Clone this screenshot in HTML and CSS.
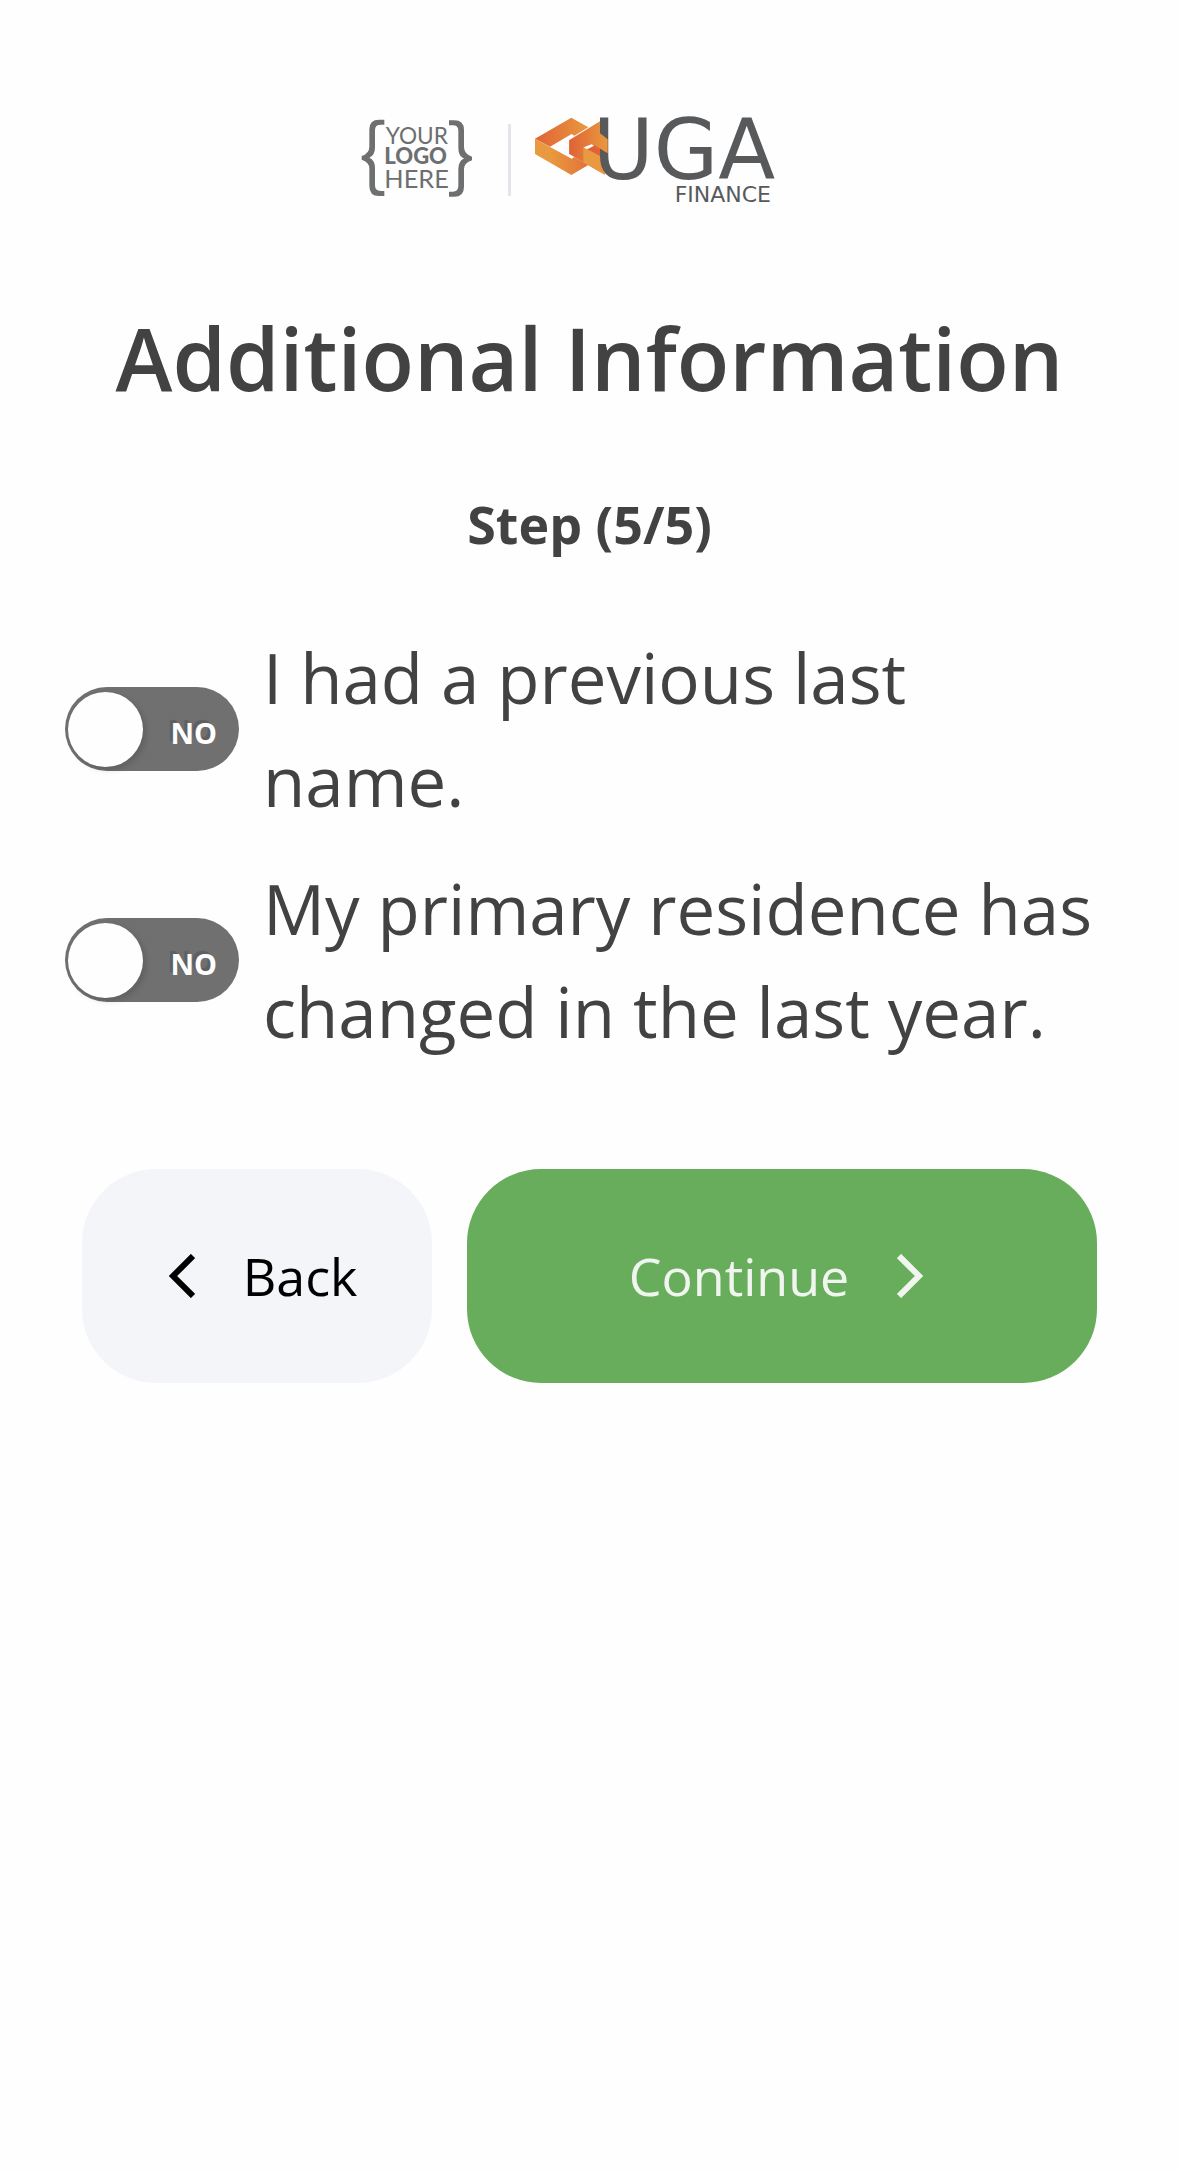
FILE: index.html
```html
<!DOCTYPE html>
<html lang="en">
<head>
  <meta charset="utf-8">
  <meta name="viewport" content="width=device-width, initial-scale=1">
  <title>Additional Information</title>
  <link rel="stylesheet" href="styles.css">
</head>
<body>
  <header class="brand">
    <svg class="partner-logo" viewBox="9 0 393 330" role="img" aria-label="Your logo here">
      <path d="M103 59H87Q58 59 58 88V140Q58 160 35 168V179Q58 187 58 205V258Q58 288 87 288H103V273H92Q75 273 75 256V205Q75 181 58 173.500Q75 166 75 142V90Q75 74 92 74H103Z"/>
      <path d="M297 61H313Q342 61 342 90V142Q342 162 366 170V181Q342 189 342 207V260Q342 290 313 290H297V275H308Q325 275 325 258V207Q325 183 342 175.500Q325 168 325 144V92Q325 76 308 76H297Z"/>
      <text class="partner-light" x="107" y="131" font-size="68">YOUR</text>
      <text class="partner-bold" x="103" y="193" font-size="66">LOGO</text>
      <text class="partner-light" x="103" y="265" font-size="76">HERE</text>
    </svg>
    <span class="divider"></span>
    <svg class="uga-logo" viewBox="45 0 873 330" role="img" aria-label="UGA Finance">
      <defs>
        <linearGradient id="toRight"><stop offset="0" stop-color="#e06236"/><stop offset="1" stop-color="#e9993f"/></linearGradient>
        <linearGradient id="toLeft"><stop offset="0.300" stop-color="#e9993f"/><stop offset="1" stop-color="#e27238"/></linearGradient>
      </defs>
      <path fill="url(#toRight)" d="M45 116L154 53L205 82L163 107L155 102L90 140Z"/>
      <path fill="url(#toLeft)" d="M45 116L155 176L163 171L205 195L154 225L45 162Z"/>
      <path fill="#e06236" d="M186 142L215 128L244 142V172Z"/>
      <path fill="url(#toRight)" d="M148 120L190 142L255 178V225L148 162Z"/>
      <path fill="#fefefe" d="M190 142L214 131L222 137L199 149Z"/>
      <text class="uga-name" x="218" y="236" font-size="250">UGA</text>
      <path fill="#e9993f" d="M190 142L240 168V216L190 187Z"/>
      <path fill="url(#toRight)" d="M148 120L240 64V100L263 118V160L217 132L190 142L148 162Z"/>
      <text class="uga-name" x="464" y="305" font-size="66">FINANCE</text>
    </svg>
  </header>

  <main class="content">
    <h1 class="title">Additional Information</h1>
    <h2 class="step">Step (5/5)</h2>

    <form class="form">
      <div class="options">
        <label class="option">
          <span class="switch">
            <input class="switch-input" type="checkbox" name="previous-name">
            <span class="knob"></span>
            <span class="state">NO</span>
          </span>
          <span class="option-text">I had a previous last name.</span>
        </label>
        <label class="option">
          <span class="switch">
            <input class="switch-input" type="checkbox" name="residence-changed">
            <span class="knob"></span>
            <span class="state">NO</span>
          </span>
          <span class="option-text">My primary residence has changed in the last year.</span>
        </label>
      </div>

      <div class="actions">
        <button class="button back" type="button">
          <svg class="chevron" viewBox="-12 0 38 44" aria-hidden="true"><path d="M24 2L4 22L24 42"/></svg>
          <span>Back</span>
        </button>
        <button class="button continue" type="submit">
          <span>Continue</span>
          <svg class="chevron" viewBox="0 0 38 44" aria-hidden="true"><path d="M2 2L22 22L2 42"/></svg>
        </button>
      </div>
    </form>
  </main>
</body>
</html>
```

FILE: styles.css
```css
* {
  box-sizing: border-box;
}

body {
  margin: 0;
  min-height: 100vh;
  background: #fefefe;
  color: #424242;
  font-family: "Open Sans", sans-serif;
}

.brand {
  display: flex;
  justify-content: center;
  align-items: flex-start;
  gap: 24px;
  padding-top: 100px;
}

.partner-logo {
  width: 131px;
  height: 110px;
  fill: #6d6f71;
}

.partner-light {
  font-family: Lato, sans-serif;
  font-weight: 400;
}

.partner-bold {
  font-family: Lato, sans-serif;
  font-weight: 900;
}

.divider {
  width: 3px;
  height: 72px;
  margin-top: 24px;
  background: #e4e4ea;
}

.uga-logo {
  width: 291px;
  height: 110px;
  overflow: visible;
}

.uga-name {
  fill: #58595b;
  font-family: "DejaVu Sans", sans-serif;
}

.title {
  margin: 88px 0 70px;
  font-size: 86px;
  line-height: 120px;
  font-weight: 600;
  text-align: center;
}

.step {
  margin: 0 0 66px;
  font-size: 52px;
  line-height: 72px;
  font-weight: 700;
  text-align: center;
}

.options {
  display: grid;
  gap: 25px;
  padding: 0 65px;
}

.option {
  display: flex;
  align-items: center;
  gap: 24px;
}

.option-text {
  font-size: 69px;
  line-height: 103px;
}

.switch {
  position: relative;
  flex: none;
  display: flex;
  align-items: center;
  justify-content: space-between;
  width: 174px;
  height: 84px;
  padding: 0 22px 0 3px;
  border-radius: 42px;
  background: #707070;
}

.switch-input {
  position: absolute;
  inset: 0;
  width: 100%;
  height: 100%;
  margin: 0;
  opacity: 0;
}

.knob {
  width: 75px;
  height: 75px;
  border-radius: 50%;
  background: #fefefe;
  box-shadow: 3px 3px 6px rgba(0, 0, 0, 0.15);
}

.state {
  padding-top: 8px;
  color: #fefefe;
  font-family: "Noto Sans", sans-serif;
  font-size: 29px;
  line-height: 40px;
  font-weight: 700;
  text-shadow: -3px -3px 1px rgba(0, 0, 0, 0.15);
}

.actions {
  display: grid;
  grid-template-columns: 5fr 9fr;
  gap: 35px;
  margin-top: 106px;
  padding: 0 82px;
}

.button {
  display: flex;
  align-items: center;
  justify-content: center;
  gap: 48px;
  padding: 72px 0;
  border: 0;
  border-radius: 74px;
  font-family: inherit;
  font-size: 52px;
  line-height: 70px;
}

.back {
  background: #f3f5f9;
  color: #000;
}

.continue {
  background: #68ad5c;
  color: #f0f6ef;
}

.chevron {
  width: 38px;
  height: 44px;
  fill: none;
  stroke: currentColor;
  stroke-width: 6;
}
```
